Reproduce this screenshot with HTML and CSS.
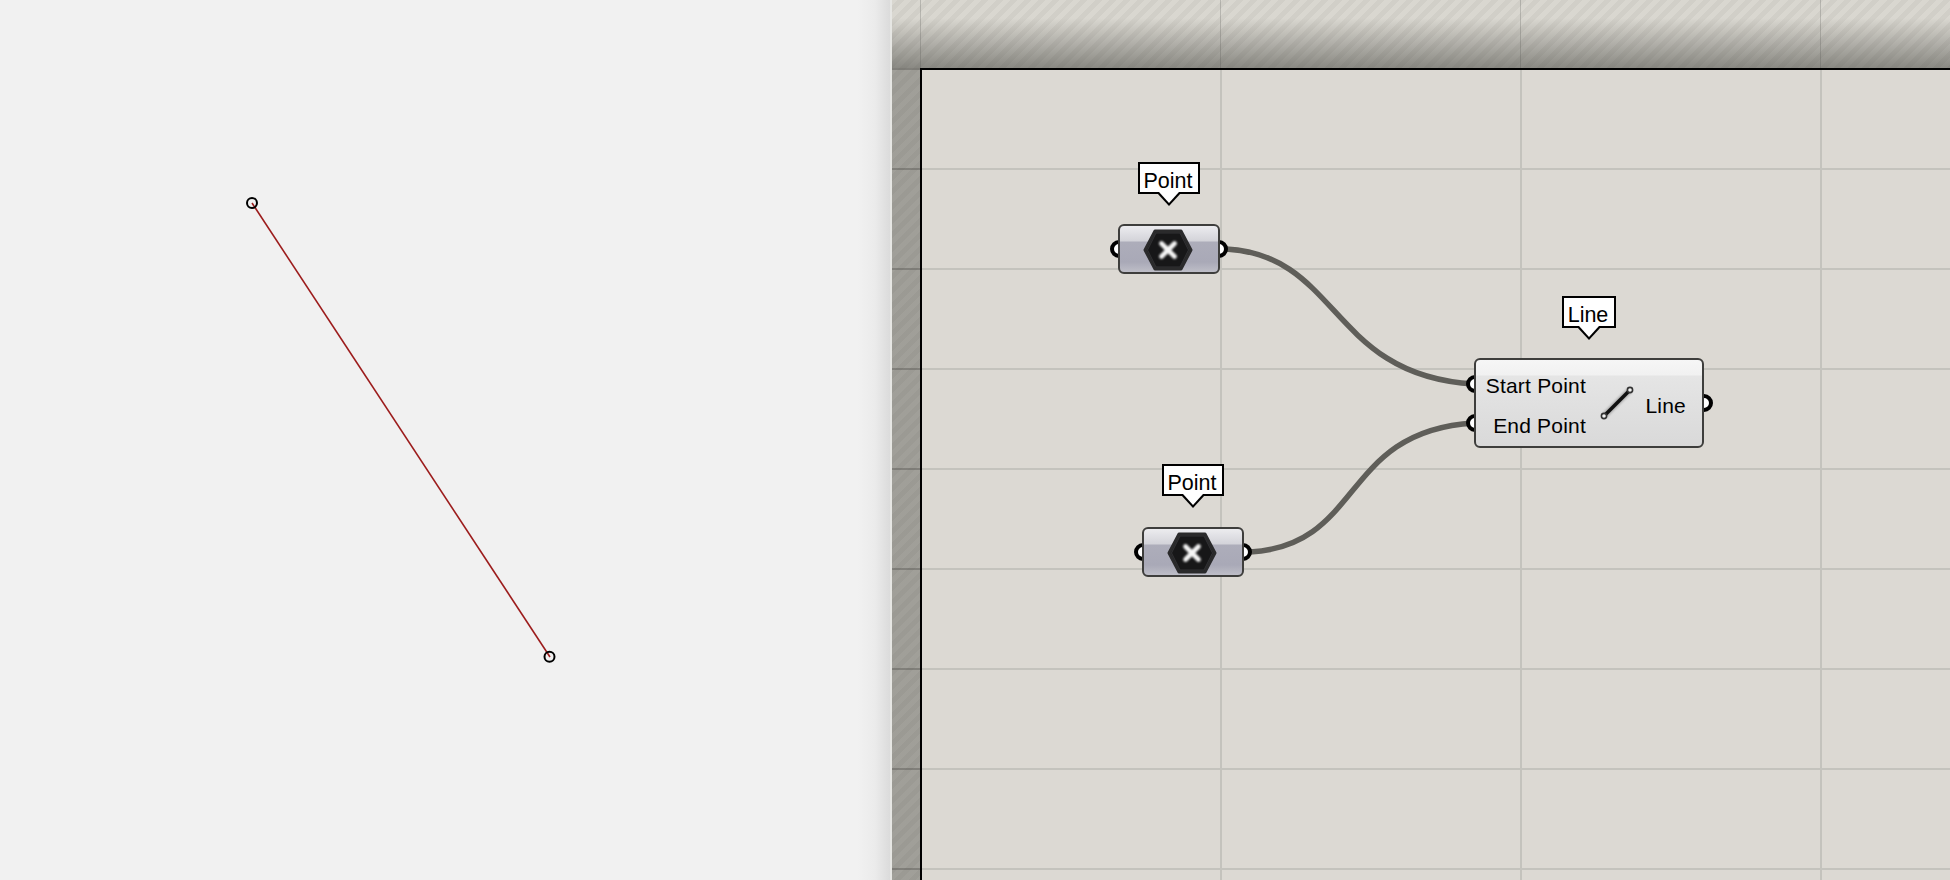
FILE: index.html
```html
<!DOCTYPE html>
<html lang="en">
<head>
  <meta charset="UTF-8" />
  <title>Line definition</title>
  <link rel="stylesheet" href="styles.css">
</head>
<body>
  <div class="app">
    <!-- rhino viewport -->
    <div class="viewport">
      <svg class="preview" width="890" height="880">
        <line x1="252" y1="203" x2="550" y2="657" stroke="#9c1c1c" stroke-width="1.6" />
        <circle cx="252" cy="203" r="5" fill="none" stroke="#000" stroke-width="2" />
        <circle cx="549.5" cy="656.7" r="5" fill="none" stroke="#000" stroke-width="2" />
      </svg>
    </div>

    <!-- grasshopper canvas -->
    <div class="editor">
      <div class="sheet"></div>

      <svg class="wires" width="1060" height="880">
        <path d="M 336 249 C 450 255, 440 376, 584 384" />
        <path d="M 360 552 C 474 546, 450 431, 584 423" />
      </svg>

      <div class="port" style="left: 220px; top: 240px"></div>
      <div class="port" style="left: 320px; top: 240px"></div>
      <div class="port" style="left: 244px; top: 543px"></div>
      <div class="port" style="left: 344px; top: 543px"></div>
      <div class="port" style="left: 576px; top: 375px"></div>
      <div class="port" style="left: 576px; top: 414px"></div>
      <div class="port" style="left: 805px; top: 394px"></div>

      <div class="tag tag-point" style="left: 248px; top: 162px">Point</div>
      <div class="tag tag-point" style="left: 272px; top: 464px">Point</div>
      <div class="tag tag-line" style="left: 672px; top: 296px">Line</div>

      <div class="node param" style="left: 228px; top: 224px">
        <svg class="hex-icon" width="50" height="42" viewBox="0 0 50 42">
          <polygon class="hex" points="12,2 38,2 48,21 38,40 12,40 2,21" />
          <polygon class="hex-rim" points="13,4 37,4 45.5,21 37,38 13,38 4.5,21" />
          <path class="cross" d="M 18.5 14.5 L 31.5 27.5 M 31.5 14.5 L 18.5 27.5" />
        </svg>
      </div>

      <div class="node param" style="left: 252px; top: 527px">
        <svg class="hex-icon" width="50" height="42" viewBox="0 0 50 42">
          <polygon class="hex" points="12,2 38,2 48,21 38,40 12,40 2,21" />
          <polygon class="hex-rim" points="13,4 37,4 45.5,21 37,38 13,38 4.5,21" />
          <path class="cross" d="M 18.5 14.5 L 31.5 27.5 M 31.5 14.5 L 18.5 27.5" />
        </svg>
      </div>

      <div class="node comp" style="left: 584px; top: 358px">
        <div class="inputs">
          <span>Start Point</span>
          <span>End Point</span>
        </div>
        <svg class="line-icon" width="36" height="36" viewBox="0 0 36 36">
          <line class="line-blur" x1="5" y1="31" x2="31" y2="5" />
          <line class="line-core" x1="5" y1="31" x2="31" y2="5" />
          <circle class="line-end" cx="5" cy="31" r="2.6" />
          <circle class="line-end" cx="31" cy="5" r="2.6" />
        </svg>
        <span class="output">Line</span>
      </div>
    </div>
  </div>
</body>
</html>
```

FILE: styles.css
```css
* {
  box-sizing: border-box;
}

html, body {
  margin: 0;
  height: 100%;
  overflow: hidden;
}

body {
  font-family: "Liberation Sans", Arial, sans-serif;
  background: #f1f1f1;
}

.app {
  display: flex;
  height: 880px;
}

.viewport {
  width: 890px;
  background: linear-gradient(to right, #f1f1f1 858px, #ebebeb 875px, #dbdbdb 890px);
}

.preview {
  display: block;
}

.editor {
  flex: 1;
  position: relative;
  overflow: hidden;
  padding: 68px 0 0 30px;
  background:
    linear-gradient(to right, #e6e6e3 2px, transparent 2px),
    linear-gradient(to bottom, rgba(60, 60, 55, 0) 18px, rgba(60, 60, 55, 0.5) 68px, rgba(60, 60, 55, 0.36) 68px),
    repeating-linear-gradient(135deg, #d9d7d0 0 5px, #d1cfc8 5px 10px);
}

/* grid lines running through the left strip */
.editor::before {
  content: "";
  position: absolute;
  left: 2px;
  top: 68px;
  width: 28px;
  bottom: 0;
  background: linear-gradient(to bottom, rgba(80, 80, 75, 0.4) 2px, transparent 2px) 0 0 / 100% 100px;
}

/* grid lines running through the top band */
.editor::after {
  content: "";
  position: absolute;
  left: 30px;
  top: 0;
  width: 1px;
  height: 68px;
  background: rgba(80, 80, 75, 0.25);
  box-shadow: 300px 0 rgba(80, 80, 75, 0.25), 600px 0 rgba(80, 80, 75, 0.25), 900px 0 rgba(80, 80, 75, 0.25);
}

.sheet {
  height: 100%;
  border-top: 2px solid #000;
  border-left: 2px solid #000;
  background-color: #dcd9d3;
  background-image:
    linear-gradient(to right, #c4c3bd 2px, transparent 2px),
    linear-gradient(to bottom, #c4c3bd 2px, transparent 2px);
  background-size: 300px 100%, 100% 100px;
  background-position: 298px 0, 0 98px;
}

.wires {
  position: absolute;
  left: 0;
  top: 0;
}

.wires path {
  fill: none;
  stroke: #5f5e59;
  stroke-width: 5.5;
}

.port {
  position: absolute;
  width: 18px;
  height: 18px;
  border-radius: 50%;
  background: #fff;
  border: 4px solid #000;
}

.tag {
  position: absolute;
  height: 32px;
  padding-right: 2px;
  background: #fff;
  border: 2px solid #000;
  color: #000;
  font-size: 21.5px;
  line-height: 35px;
  text-align: center;
}

.tag-point {
  width: 62px;
}

.tag-line {
  width: 54px;
}

/* pointer under the label */
.tag::before,
.tag::after {
  content: "";
  position: absolute;
  left: 50%;
  width: 0;
  height: 0;
}

.tag::before {
  top: 29px;
  margin-left: -12px;
  border-left: 12px solid transparent;
  border-right: 12px solid transparent;
  border-top: 13px solid #000;
}

.tag::after {
  top: 28px;
  margin-left: -10px;
  border-left: 10px solid transparent;
  border-right: 10px solid transparent;
  border-top: 11px solid #fff;
}

.node {
  position: absolute;
  border: 2px solid #3e3e3c;
  border-radius: 6px;
}

.param {
  width: 102px;
  height: 50px;
  display: flex;
  align-items: center;
  justify-content: center;
  padding-top: 2px;
  background: linear-gradient(to bottom, #ececef 0, #d3d3d9 15px, #adadba 16px, #a9a9b7 36px, #c0c0c9 47px);
}

.hex-icon {
  margin-left: -2px;
  overflow: visible;
}

.hex {
  fill: #1c1c1d;
  stroke: #2a2a2b;
  stroke-width: 3;
  stroke-linejoin: round;
  filter: blur(0.6px);
}

.hex-rim {
  fill: #171718;
  stroke: #333335;
  stroke-width: 1;
  filter: blur(0.5px);
}

.cross {
  fill: none;
  stroke: #f6f6f6;
  stroke-width: 4.6;
  stroke-linecap: round;
  filter: blur(0.8px);
}

.comp {
  width: 230px;
  height: 90px;
  display: flex;
  align-items: center;
  padding: 5px 16px 0 8px;
  font-size: 21px;
  letter-spacing: 0.2px;
  color: #000;
  background: linear-gradient(to bottom, #f6f6f6 0, #f1f1f1 15px, #e5e5e5 16px, #d9d9d9 86px);
}

.inputs {
  width: 102px;
  display: flex;
  flex-direction: column;
  gap: 16px;
  text-align: right;
  white-space: nowrap;
}

.line-icon {
  margin: -5px 0 0 13px;
}

.line-blur {
  stroke: rgba(0, 0, 0, 0.25);
  stroke-width: 6;
  filter: blur(1px);
}

.line-core {
  stroke: #111;
  stroke-width: 3.6;
}

.line-end {
  fill: #f2f2f2;
  stroke: #333;
  stroke-width: 1.6;
}

.output {
  margin-left: auto;
}
```
